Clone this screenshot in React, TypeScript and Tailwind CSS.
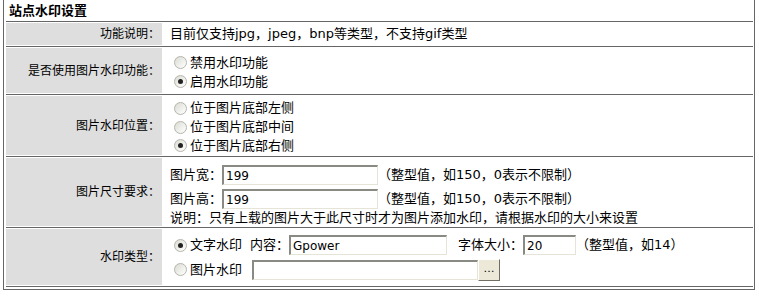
const font = "font-['DejaVu_Sans','Noto_Sans_CJK_SC',sans-serif]"

function Radio({ checked, label }: { checked?: boolean; label: string }) {
  return (
    <div className="flex items-center">
      <span className="ml-[4px] flex h-[13px] w-[13px] items-center justify-center rounded-full border border-[#b5b5ad] bg-gradient-to-br from-[#dcdcd4] to-white">
        {checked && <span className="h-[5px] w-[5px] rounded-full bg-[#222]" />}
      </span>
      <span className="ml-[3px]">{label}</span>
    </div>
  )
}

function TextBox({ value, w }: { value?: string; w: string }) {
  return (
    <div
      className={`flex h-[20px] items-center border-t-2 border-l-2 border-t-[#8a8a85] border-l-[#8a8a85] border-r border-b border-r-[#e6e4d6] border-b-[#e6e4d6] bg-white pl-[2px] text-[12px] ${w}`}
    >
      {value}
    </div>
  )
}

function Row({ label, h, children }: { label: string; h: string; children: React.ReactNode }) {
  return (
    <div className={`flex border-b border-[#666] py-[1px] ${h}`}>
      <div className="flex w-[156px] shrink-0 items-center justify-end bg-[#dedede] pr-[2px] text-[12px]">{label}</div>
      <div className="ml-[2px] flex-1 pl-[6px] text-[13px]">{children}</div>
    </div>
  )
}

export default function App() {
  return (
    <div className={`h-[297px] w-[759px] bg-white text-[12px] leading-[14px] text-black ${font}`}>
      <div className="ml-[3px] w-[752px] border-x border-b border-[#666] pb-[2px] pl-[2px] pr-[1px]">
        <div className="flex h-[21px] items-center pl-[3px] text-[13px] font-bold">站点水印设置</div>
        <div className="border-t border-[#666]">
          <Row label="功能说明：" h="h-[25px]">
            <div className="flex h-full items-center">目前仅支持jpg，jpeg，bnp等类型，不支持gif类型</div>
          </Row>
          <Row label="是否使用图片水印功能：" h="h-[48px]">
            <div className="-ml-[6px] flex h-full flex-col justify-center pl-[6px] pt-[3px]">
              <div className="flex h-[19px] items-center">
                <Radio label="禁用水印功能" />
              </div>
              <div className="flex h-[19px] items-center">
                <Radio checked label="启用水印功能" />
              </div>
            </div>
          </Row>
          <Row label="图片水印位置：" h="h-[62px]">
            <div className="-ml-[6px] flex h-full flex-col justify-center pl-[6px] pt-[3px]">
              <div className="flex h-[20px] items-center">
                <Radio label="位于图片底部左侧" />
              </div>
              <div className="flex h-[20px] items-center">
                <Radio label="位于图片底部中间" />
              </div>
              <div className="flex h-[20px] items-center">
                <Radio checked label="位于图片底部右侧" />
              </div>
            </div>
          </Row>
          <Row label="图片尺寸要求：" h="h-[71px]">
            <div className="flex flex-col pt-[5px]">
              <div className="flex h-[24px] items-center">
                <span>图片宽：</span>
                <TextBox value="199" w="w-[156px]" />
                <span>（整型值，如150，0表示不限制）</span>
              </div>
              <div className="flex h-[24px] items-center">
                <span>图片高：</span>
                <TextBox value="199" w="w-[156px]" />
                <span>（整型值，如150，0表示不限制）</span>
              </div>
              <div className="flex h-[14px] items-center">说明：只有上载的图片大于此尺寸时才为图片添加水印，请根据水印的大小来设置</div>
            </div>
          </Row>
          <Row label="水印类型：" h="h-[59px]">
            <div className="-ml-[6px] flex flex-col pt-[4px] pl-[6px]">
              <div className="flex h-[24px] items-center">
                <Radio checked label="文字水印" />
                <span className="ml-[8px]">内容：</span>
                <TextBox value="Gpower" w="w-[158px]" />
                <span className="ml-[11px]">字体大小：</span>
                <TextBox value="20" w="w-[53px]" />
                <span>（整型值，如14）</span>
              </div>
              <div className="flex h-[25px] items-center">
                <Radio label="图片水印" />
                <TextBox w="ml-[10px] w-[226px]" />
                <div className="flex h-[22px] w-[22px] items-center justify-center border border-t-white border-l-white border-r-[#716f64] border-b-[#716f64] bg-[#ece9d8] pb-[2px] text-[11px]">
                  …
                </div>
              </div>
            </div>
          </Row>
        </div>
      </div>
    </div>
  )
}
